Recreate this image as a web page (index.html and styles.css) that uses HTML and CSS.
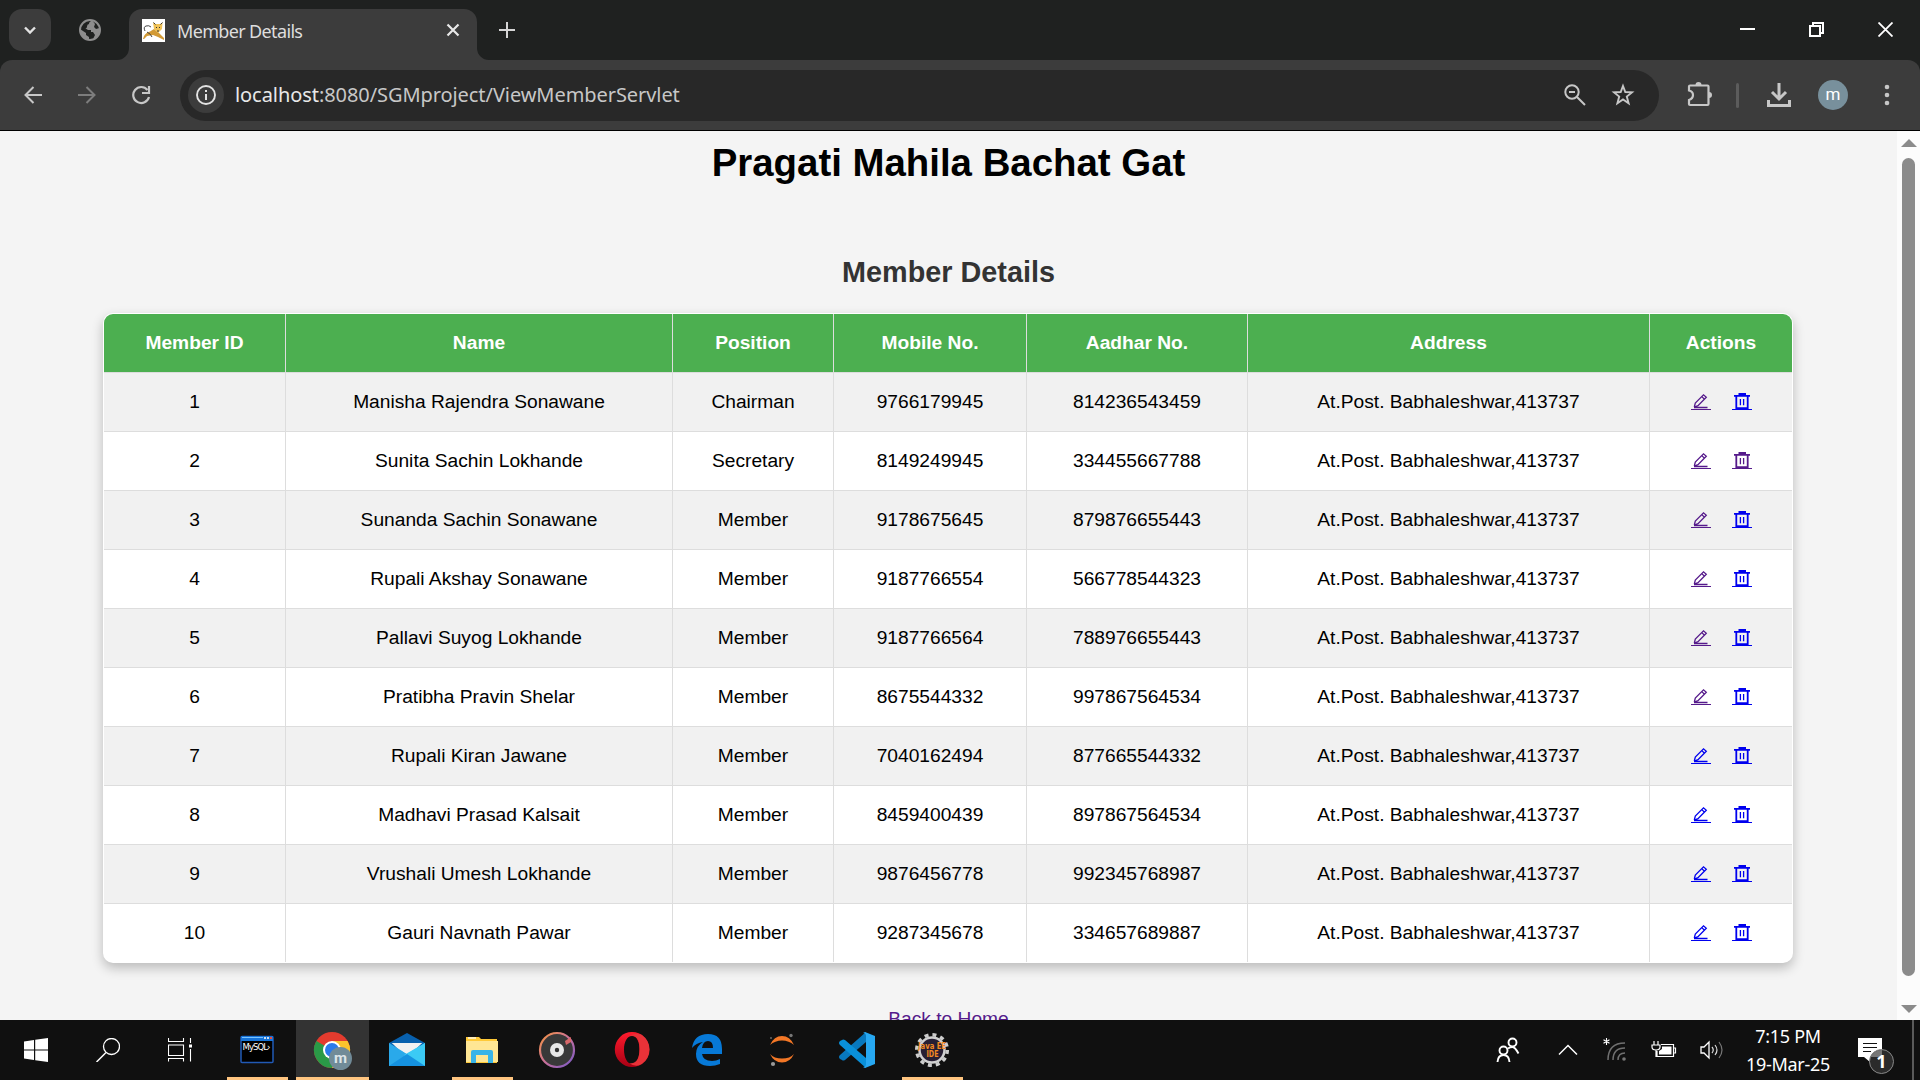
FILE: index.html
```html
<!DOCTYPE html>
<html lang="en">
<head>
<meta charset="utf-8">
<title>Member Details</title>
<link rel="stylesheet" href="styles.css">
</head>
<body>
<svg class="defs" width="0" height="0" aria-hidden="true">
  <symbol id="edit" viewBox="0 0 20 20">
    <path d="M3 15.500H16.500M3.300 15L4.300 11L12.500 2.800L15.300 5.300L7 13.700L3.300 15M10.800 4.600L13.500 7.200" fill="none" stroke="currentColor" stroke-width="1.300"/>
    <path d="M0 17.500H20" stroke="currentColor"/>
  </symbol>
  <symbol id="trash" viewBox="0 0 20 20">
    <path d="M2 3.800H18M6.500 2H14M4.300 3V16.200H15.700V3" fill="none" stroke="currentColor" stroke-width="1.800"/>
    <path d="M8.400 7V13.200M11.600 7V13.200" stroke="currentColor" stroke-width="1.300"/>
    <path d="M0 17.500H20" stroke="currentColor"/>
  </symbol>
</svg>

<header class="tabstrip">
  <button class="tab-search"><svg width="20" height="20" viewBox="0 0 20 20"><path d="M5 7.500L10 12.500L15 7.500" fill="none" stroke="#e3e3e3" stroke-width="2.400"/></svg></button>
  <div class="pinned"><svg width="24" height="24" viewBox="0 0 24 24"><circle cx="12" cy="12" r="10" fill="none" stroke="#8d8d8d" stroke-width="2"/><path d="M14 2C12 4 11 4 11 6Q9 6 9 8.500T7 10L10 12H13V14H15L17 17L15 21C20 19 22 15 21.500 10L18 11L16 9L17 6ZM2 11L8 15V17L11 19V22C5 21 2 17 2 11Z" fill="#8d8d8d"/></svg></div>
  <div class="tab">
    <svg class="flare" width="12" height="12"><path d="M12 0V12H0A12 12 0 0 0 12 0Z" fill="#3c3c3c"/></svg>
    <div class="tab-body">
      <svg width="23" height="23" viewBox="0 0 23 23"><path fill="#fff" d="M0 0H23V23H0Z"/><path d="M1 20Q2 14 8 12.500L12 10L17 14L22 19V21L16 18L11 16L5 17L2 20Z" fill="#d29a36"/><path d="M11 3.500L13.500 5H18L20.500 3.500L20 10L16 14L12 10Z" fill="#f0c257"/><path d="M11.500 3.500L13.500 5.500M20.500 3.500L18.500 5.500M14 8.500H15M17 8.500H18M15 12H17" stroke="#333" fill="none"/><path d="M3 12Q1 8 4 7T9 8M5 13Q9 15 10 18" fill="none" stroke="#444"/></svg>
      <span class="tab-title">Member Details</span>
      <svg width="14" height="14" viewBox="0 0 14 14"><path d="M1.500 1.500L12.500 12.500M12.500 1.500L1.500 12.500" stroke="#e8e8e8" stroke-width="2.200"/></svg>
    </div>
    <svg class="flare" width="12" height="12"><path d="M0 0V12H12A12 12 0 0 1 0 0Z" fill="#3c3c3c"/></svg>
  </div>
  <svg class="plus" width="16" height="16"><path d="M8 0V16M0 8H16" stroke="#d6d6d6" stroke-width="2"/></svg>
  <div class="window-controls">
    <svg width="15" height="15"><path d="M0 7H15" stroke="#fff" stroke-width="2"/></svg>
    <svg width="15" height="15"><path d="M1 4H11V14H1ZM4 4V1H14V11H11" fill="none" stroke="#fff" stroke-width="2"/></svg>
    <svg width="15" height="15"><path d="M.5.5L14.500 14.500M14.500.5L.5 14.500" stroke="#fff" stroke-width="1.800"/></svg>
  </div>
</header>

<nav class="toolbar-back">
<div class="toolbar">
  <svg class="nav-icon" width="20" height="20" viewBox="0 0 20 20"><path d="M19 10H3M10.500 2L2.500 10L10.500 18" fill="none" stroke="#c7c7c7" stroke-width="2"/></svg>
  <svg class="nav-icon" width="20" height="20" viewBox="0 0 20 20"><path d="M1 10H17M9.500 2L17.500 10L9.500 18" fill="none" stroke="#7d7d7d" stroke-width="2"/></svg>
  <svg class="nav-icon" width="20" height="20" viewBox="0 0 20 20"><path d="M16.500 5A8 8 0 1 0 18 12" fill="none" stroke="#c7c7c7" stroke-width="2.200"/><path d="M18 1V8H11" fill="none" stroke="#c7c7c7" stroke-width="2.200"/></svg>
  <div class="omnibox">
    <span class="site-info"><svg width="22" height="22"><circle cx="11" cy="11" r="9" fill="none" stroke="#e3e3e3" stroke-width="1.900"/><path d="M11 10V16M11 6V8" stroke="#e3e3e3" stroke-width="2"/></svg></span>
    <span class="url"><b>localhost</b>:8080/SGMproject/ViewMemberServlet</span>
    <svg class="magnify" width="22" height="22"><circle cx="8" cy="8" r="6.700" fill="none" stroke="#c7c7c7" stroke-width="2"/><path d="M13 13L21 21M5 8H11" stroke="#c7c7c7" stroke-width="2"/></svg>
    <svg width="24" height="24" viewBox="0 0 24 24"><path d="M12 3L14.300 9L21 9.400L15.800 13.600L17.600 20.200L12 16.500L6.400 20.200L8.200 13.600L3 9.400L9.700 9Z" fill="none" stroke="#c7c7c7" stroke-width="1.900"/></svg>
  </div>
  <svg class="puzzle" width="26" height="26"><path d="M2 4.500Q2 3.500 3 3.500H20.500Q21.500 3.500 21.500 4.500V22Q21.500 23 20.500 23H3Q2 23 2 22V18Q6 16.500 6 13T2 8.500Z" fill="none" stroke="#c7c7c7" stroke-width="2.200"/><path d="M8.500 3A3 3 0 0 1 14.500 3ZM22 10A3 3 0 0 1 22 16Z" fill="#c7c7c7"/></svg>
  <i class="separator"></i>
  <svg class="download" width="24" height="24"><path d="M12 0V15M5 9L12 16L19 9M1.500 17V22.500H22.500V17" fill="none" stroke="#c7c7c7" stroke-width="3"/></svg>
  <span class="avatar">m</span>
  <svg class="dots" width="6" height="22"><g fill="#c7c7c7"><circle cx="3" cy="3" r="2.300"/><circle cx="3" cy="11" r="2.300"/><circle cx="3" cy="19" r="2.300"/></g></svg>
</div>
</nav>

<div class="viewport">
<main class="page">
  <h1>Pragati Mahila Bachat Gat</h1>
  <h2>Member Details</h2>
  <div class="card">
  <table class="members">
    <colgroup><col class="c-id"><col class="c-name"><col class="c-position"><col class="c-mobile"><col class="c-aadhar"><col class="c-address"><col class="c-actions"></colgroup>
    <thead><tr><th>Member ID</th><th>Name</th><th>Position</th><th>Mobile No.</th><th>Aadhar No.</th><th>Address</th><th>Actions</th></tr></thead>
    <tbody>
    <tr><td>1</td><td>Manisha Rajendra Sonawane</td><td>Chairman</td><td>9766179945</td><td>814236543459</td><td>At.Post. Babhaleshwar,413737</td><td><div class="actions"><svg class="visited"><use href="#edit"/></svg><svg><use href="#trash"/></svg></div></td></tr>
    <tr><td>2</td><td>Sunita Sachin Lokhande</td><td>Secretary</td><td>8149249945</td><td>334455667788</td><td>At.Post. Babhaleshwar,413737</td><td><div class="actions"><svg class="visited"><use href="#edit"/></svg><svg class="visited"><use href="#trash"/></svg></div></td></tr>
    <tr><td>3</td><td>Sunanda Sachin Sonawane</td><td>Member</td><td>9178675645</td><td>879876655443</td><td>At.Post. Babhaleshwar,413737</td><td><div class="actions"><svg class="visited"><use href="#edit"/></svg><svg><use href="#trash"/></svg></div></td></tr>
    <tr><td>4</td><td>Rupali Akshay Sonawane</td><td>Member</td><td>9187766554</td><td>566778544323</td><td>At.Post. Babhaleshwar,413737</td><td><div class="actions"><svg class="visited"><use href="#edit"/></svg><svg><use href="#trash"/></svg></div></td></tr>
    <tr><td>5</td><td>Pallavi Suyog Lokhande</td><td>Member</td><td>9187766564</td><td>788976655443</td><td>At.Post. Babhaleshwar,413737</td><td><div class="actions"><svg class="visited"><use href="#edit"/></svg><svg><use href="#trash"/></svg></div></td></tr>
    <tr><td>6</td><td>Pratibha Pravin Shelar</td><td>Member</td><td>8675544332</td><td>997867564534</td><td>At.Post. Babhaleshwar,413737</td><td><div class="actions"><svg class="visited"><use href="#edit"/></svg><svg><use href="#trash"/></svg></div></td></tr>
    <tr><td>7</td><td>Rupali Kiran Jawane</td><td>Member</td><td>7040162494</td><td>877665544332</td><td>At.Post. Babhaleshwar,413737</td><td><div class="actions"><svg><use href="#edit"/></svg><svg><use href="#trash"/></svg></div></td></tr>
    <tr><td>8</td><td>Madhavi Prasad Kalsait</td><td>Member</td><td>8459400439</td><td>897867564534</td><td>At.Post. Babhaleshwar,413737</td><td><div class="actions"><svg><use href="#edit"/></svg><svg><use href="#trash"/></svg></div></td></tr>
    <tr><td>9</td><td>Vrushali Umesh Lokhande</td><td>Member</td><td>9876456778</td><td>992345768987</td><td>At.Post. Babhaleshwar,413737</td><td><div class="actions"><svg><use href="#edit"/></svg><svg><use href="#trash"/></svg></div></td></tr>
    <tr><td>10</td><td>Gauri Navnath Pawar</td><td>Member</td><td>9287345678</td><td>334657689887</td><td>At.Post. Babhaleshwar,413737</td><td><div class="actions"><svg><use href="#edit"/></svg><svg><use href="#trash"/></svg></div></td></tr>
    </tbody>
  </table>
  </div>
  <a class="home-link" href="#">Back to Home</a>
</main>
<aside class="scrollbar">
  <svg width="16" height="8"><path d="M8 0L16 8H0Z" fill="#8b8b8b"/></svg>
  <i class="thumb"></i>
  <svg width="16" height="8"><path d="M8 8L16 0H0Z" fill="#8b8b8b"/></svg>
</aside>
</div>

<footer class="taskbar">
  <div class="system">
    <svg width="24" height="24"><path d="M0 3.500L10 2V11.500H0ZM11.200 1.800L24 0V11.500H11.200ZM0 12.600H10V22L0 20.500ZM11.200 12.600H24V24L11.200 22.200Z" fill="#fff"/></svg>
    <svg width="24" height="24"><circle cx="15.500" cy="8.500" r="8" fill="none" stroke="#fff" stroke-width="1.300"/><path d="M10 14.500L.5 24" stroke="#fff" stroke-width="1.500"/></svg>
    <svg width="24" height="24"><path d="M.5 0V3.500H15.500V0M.5 7H15.500V17.500H.5ZM.5 23.500V20.500H15.500V23.500M22.500 0V5M22.500 11V23.500" fill="none" stroke="#fff" stroke-width="1.100"/><path d="M21 6.500H24V9.500H21Z" fill="#fff"/></svg>
  </div>
  <div class="apps">
    <div class="app open"><svg width="40" height="40"><rect x="4" y="6.500" width="32" height="26" rx="1" fill="#000" stroke="#2159b5" stroke-width="1.500"/><path d="M4 6H36V11H4Z" fill="#1673d8"/><path d="M5 7.500H26" stroke="#77c3ff"/><path d="M27 8H29M30 8H32" stroke="#cde" stroke-width="2"/><path d="M33 8H35" stroke="#e8503c" stroke-width="2"/><text class="mysql" x="5.500" y="20" textLength="28">MySQL›</text></svg></div>
    <div class="app open active"><svg width="40" height="40"><circle cx="20" cy="20" r="18" fill="#e33b2e"/><path d="M4.400 11A18 18 0 0 0 20 38L27.800 24.500L20 20Z" fill="#2a9a47"/><path d="M35.600 11A18 18 0 0 1 20 38L27.800 24.500L20 11Z" fill="#fcc42c"/><circle cx="20" cy="20" r="9" fill="#fff"/><circle cx="20" cy="20" r="7" fill="#2b7bea"/><circle cx="28.500" cy="28.500" r="11.500" fill="#718b98"/><text class="profile" x="28.500" y="33">m</text></svg></div>
    <div class="app"><svg width="40" height="40"><path d="M2 13L20 3L38 13V20H2Z" fill="#0860ad"/><path d="M5 13H35L20 28Z" fill="#f1f1f1"/><path d="M2 13L20 24L38 13V36H2Z" fill="#2aa9ea"/><path d="M5 13H35L20 24Z" fill="#f1f1f1"/><path d="M38 13L17 25L30 36H38Z" fill="#3bcaf5"/><path d="M2 36L20 24L38 36Z" fill="#1592e0"/></svg></div>
    <div class="app open"><svg width="40" height="40"><path d="M4 7H17L19 9H35V33H4Z" fill="#ffc938"/><path d="M4 11H36V32H4Z" fill="#ffe694"/><path d="M6 8H14" stroke="#fff" stroke-width="1.300"/><path d="M9 33V22Q9 20 11 20H29Q31 20 31 22V33H26V25H14V33Z" fill="#38b4e8"/></svg></div>
    <div class="app"><svg width="40" height="40"><defs><linearGradient id="ring" x1="0" y1="0" x2="1" y2="1"><stop offset="0" stop-color="#f7953e"/><stop offset=".5" stop-color="#c9709b"/><stop offset="1" stop-color="#7559c8"/></linearGradient></defs><circle cx="20" cy="20" r="17" fill="#393939" stroke="url(#ring)" stroke-width="2.200"/><path d="M28 11L34 7V12L29 15Z" fill="#d8686a"/><circle cx="20" cy="20" r="7" fill="#e8e8e8"/><circle cx="20" cy="20" r="2.200" fill="#333"/></svg></div>
    <div class="app"><svg width="40" height="40"><defs><linearGradient id="opera" x1="0" y1="0" x2="0" y2="1"><stop offset="0" stop-color="#ff1b2d"/><stop offset="1" stop-color="#a70014"/></linearGradient></defs><path fill="url(#opera)" fill-rule="evenodd" d="M20 2A17.200 17.500 0 1 0 20 37A17.200 17.500 0 1 0 20 2ZM20 6C25 6 27.500 12 27.500 19.500S25 34 20 34S12 27 12 19.500S15 6 20 6Z"/><path d="M17 6Q24 2 30 5A17.200 17.500 0 0 1 30 34Q24 38 17 33Q27 35 27.500 19.500T17 6Z" fill="#e83238"/></svg></div>
    <div class="app"><svg width="40" height="40"><path d="M5 18Q7 4 21 4Q35 4 35 19V24H15Q16 31 25 31Q29 31 33 29V34Q28 36 23 36Q9 36 9 24Q9 16 16 12Q9 13 5 18ZM15 18H26Q26 11 21 11T15 18Z" fill="#0779d7"/></svg></div>
    <div class="app"><svg width="40" height="40"><path d="M8 15Q12 6 20 6T32 15Q27 10.500 20 10.500T8 15ZM8 24Q12 28.500 20 28.500T32 24Q28 32.500 20 32.500T8 24Z" fill="#f37726"/><circle cx="29" cy="5.500" r="1.700" fill="#777"/><circle cx="9" cy="8" r="1" fill="#666"/><circle cx="11" cy="34" r="2.100" fill="#999"/></svg></div>
    <div class="app"><svg width="40" height="40"><path d="M29 2L3 25Q1 27 3 29L5 30Q6 31 8 30L29 12Z" fill="#0878be"/><path d="M29 38L3 15Q1 13 3 11L5 10Q6 9 8 10L29 28Z" fill="#0990da"/><path d="M28 2L38 6V34L28 38L26 37Q29 37 29 34V6Q29 3 26 3Z" fill="#27a8f2"/></svg></div>
    <div class="app open"><svg width="40" height="40"><circle cx="20" cy="20" r="15.300" fill="none" stroke="#ccc" stroke-width="3.500" stroke-dasharray="4 4.010"/><circle cx="20" cy="20" r="12.500" fill="#271f33" stroke="#d0d0d0" stroke-width="2.500"/><text class="javaee" x="6" y="18.500" textLength="28" lengthAdjust="spacingAndGlyphs">Java EE</text><text class="javaee" x="14.500" y="26.500" textLength="12" lengthAdjust="spacingAndGlyphs">IDE</text></svg></div>
  </div>
  <div class="tray">
    <svg width="24" height="26"><g fill="none" stroke="#fff" stroke-width="1.900"><circle cx="16.500" cy="5.500" r="4"/><circle cx="7.500" cy="13.500" r="4"/><path d="M1.500 25Q2 18 7.500 18T13.500 25M12 11.500Q14 10 16.500 10T22.500 16.500"/></g></svg>
    <svg width="20" height="12"><path d="M1 10.500L10 1.500L19 10.500" fill="none" stroke="#fff" stroke-width="1.500"/></svg>
    <svg width="30" height="30"><g fill="none" stroke="#707070" stroke-width="1.500"><path d="M8 25Q8 8 25 8"/><path d="M13 25Q13 13 25 13"/><path d="M18 25Q18 18 25 18"/></g><circle cx="24" cy="24" r="1.800" fill="#777"/><path d="M6.500 3V10M3.500 4.800L9.500 8.200M9.500 4.800L3.500 8.200" stroke="#fff" stroke-width="1.100"/></svg>
    <svg width="26" height="26"><path d="M10 7.500H22.500V19.500H6V14M22.500 11H24.500V16H22.500M3 4V8M7 4V8M1 8H9V10Q9 13 5 13T1 10ZM5 13V19.500H8" fill="none" stroke="#fff" stroke-width="1.200"/><path d="M11 9.500H20.500V17.500H8V14L11 12Z" fill="#fff"/></svg>
    <svg width="24" height="20"><path d="M1 7H4L9 2V18L4 13H1Z" fill="none" stroke="#fff" stroke-width="1.300"/><path d="M12 7Q14.500 10 12 13M15 5Q19 10 15 15" fill="none" stroke="#ddd" stroke-width="1.200"/><path d="M19 2Q25 10 19 18" fill="none" stroke="#777" stroke-width="1.200"/></svg>
    <div class="clock"><span class="time">7:15 PM</span><span class="date">19-Mar-25</span></div>
    <svg width="46" height="60"><path d="M8 18H32V37H20V42L14 37H8Z" fill="#fff"/><path d="M13 23.500H27M13 27.500H27M13 31.500H21" stroke="#111" stroke-width="1.200"/><circle cx="31.500" cy="41.500" r="12" fill="#2b2b2b" stroke="#888"/><path d="M20 38A12 12 0 0 1 32 30V37H20Z" fill="#777"/><text class="count" x="31.500" y="48">1</text></svg>
    <i class="show-desktop"></i>
  </div>
</footer>
</body>
</html>
```

FILE: styles.css
```css
* { box-sizing: border-box; }
body { margin: 0; width: 1920px; height: 1080px; overflow: hidden; display: flex; flex-direction: column; background: #101010; font-family: "Liberation Sans", Arial, sans-serif; }
svg { display: block; flex: none; }
.defs { position: absolute; }

.tabstrip { height: 60px; flex: none; background: #1f2120; display: flex; padding: 9px 27px 0 9px; font-family: "Noto Sans", "Open Sans", sans-serif; }
.tab-search { width: 42px; height: 42px; border: 0; border-radius: 13px; background: #3c3c3c; padding: 0; display: grid; place-items: center; }
.pinned { width: 66px; height: 42px; display: grid; place-items: center; padding-left: 11px; }
.tab { display: flex; align-items: flex-end; }
.tab-body { width: 348px; height: 51px; background: #3c3c3c; border-radius: 13px 13px 0 0; display: flex; align-items: center; padding: 0 17px 9px 13px; gap: 12px; }
.tab-title { flex: 1; color: #dedede; font-size: 18px; line-height: 24px; letter-spacing: -0.65px; padding-top: 2px; }
.plus { margin: 13px 0 0 10px; }
.window-controls { margin: 13px 0 0 auto; display: flex; gap: 54px; }

.toolbar-back { flex: none; background: #1f2120; }
.toolbar { height: 71px; background: #3c3c3c; border-bottom: 1px solid #000; border-radius: 12px 12px 0 0; display: flex; align-items: center; padding: 0 30px 0 23px; }
.nav-icon { margin-right: 34px; }
.omnibox { width: 1479px; height: 51px; margin: 0 28px 0 -5px; border-radius: 26px; background: #282828; display: flex; align-items: center; padding: 0 24px 0 8px; }
.site-info { width: 36px; height: 36px; border-radius: 50%; background: #3c3c3c; display: grid; place-items: center; }
.url { flex: 1; margin-left: 11px; font: 20px/28px "Noto Sans", "Open Sans", sans-serif; letter-spacing: -0.07px; color: #c7c7c7; white-space: nowrap; }
.url b { font-weight: 400; color: #e8e8e8; }
.magnify { margin-right: 25px; }
.separator { width: 3px; height: 25px; border-radius: 2px; background: #5c5c5c; margin: 0 28px 0 23px; }
.avatar { width: 30px; height: 30px; border-radius: 50%; background: #78909c; color: #fff; font: 17px/29px Roboto, sans-serif; text-align: center; margin: 0 36px 0 27px; }

.viewport { height: 889px; flex: none; display: flex; background: #f4f4f4; overflow: hidden; }
.page { width: 1897px; height: 889px; overflow: hidden; display: flex; flex-direction: column; align-items: center; }
h1 { margin: 0 0 53px; font-size: 38.400px; line-height: 64px; color: #000; }
h2 { margin: 0 0 17px; font-size: 28.800px; line-height: 48px; color: #333; }
.card { flex: none; width: 1690px; height: 650px; margin-right: 1px; padding: 1px; background: #fff; border-radius: 10px; overflow: hidden; box-shadow: 0 5px 12px rgba(0, 0, 0, .24); }
.members { width: 1688px; table-layout: fixed; border-collapse: separate; border-spacing: 0; font-size: 19.200px; text-align: center; border-radius: 9px; overflow: hidden; }
.c-id { width: 182px; }
.c-name { width: 387px; }
.c-position { width: 161px; }
.c-mobile { width: 193px; }
.c-aadhar { width: 221px; }
.c-address { width: 402px; }
.c-actions { width: 142px; }
th, td { height: 59px; padding: 0; border-right: 1px solid #ddd; border-bottom: 1px solid #ddd; line-height: 22px; white-space: nowrap; }
th:last-child, td:last-child { border-right: 0; }
th { background: #4caf50; color: #fff; }
tbody tr:nth-child(odd) { background: #f1f1f1; }
tbody tr:last-child td { height: 58px; border-bottom: 0; }
.actions { display: flex; justify-content: center; gap: 21px; color: #00e; }
.actions svg { width: 20px; height: 20px; }
.actions .visited { color: #551a8b; }
.home-link { margin-top: 44px; font-size: 19.200px; line-height: 24px; color: #551a8b; }

.scrollbar { width: 23px; background: #fcfcfc; display: flex; flex-direction: column; align-items: center; justify-content: space-between; padding: 8px 0 7px; }
.thumb { width: 13px; height: 818px; margin-bottom: 19px; border-radius: 7px; background: #8b8b8b; }

.taskbar { height: 60px; flex: none; background: #101010; display: flex; }
.system { width: 219px; display: flex; align-items: center; padding-left: 24px; gap: 48px; }
.apps { display: flex; gap: 2px; padding-left: 2px; }
.app { width: 73px; height: 60px; display: flex; flex-direction: column; align-items: center; padding-top: 10px; }
.app svg { margin-right: 2px; }
.open::after { content: ""; width: 61px; height: 3px; margin-top: 7px; background: #ffc580; }
.active { background: #333; }
.active::after { width: 73px; }
.mysql { font: 8.500px "DejaVu Sans", sans-serif; fill: #fff; }
.profile { font: bold 15px Roboto, sans-serif; fill: #dce4e8; text-anchor: middle; }
.javaee { font: bold 8px "DejaVu Sans", sans-serif; fill: #f58a22; }
.tray { margin-left: auto; width: 440px; display: grid; grid-template-columns: 56px 64px 30px 68px 28px 124px 46px 1fr; align-items: center; justify-items: center; }
.clock { display: flex; flex-direction: column; align-items: center; color: #fff; font: 18px/28px "Noto Sans", "Open Sans", sans-serif; white-space: nowrap; }
.time { letter-spacing: -0.3px; }
.date { letter-spacing: -0.3px; }
.count { font: bold 18px "Noto Sans", sans-serif; fill: #fff; text-anchor: middle; }
.show-desktop { width: 2px; height: 60px; background: #5a5a5a; margin-left: 10px; }
```
